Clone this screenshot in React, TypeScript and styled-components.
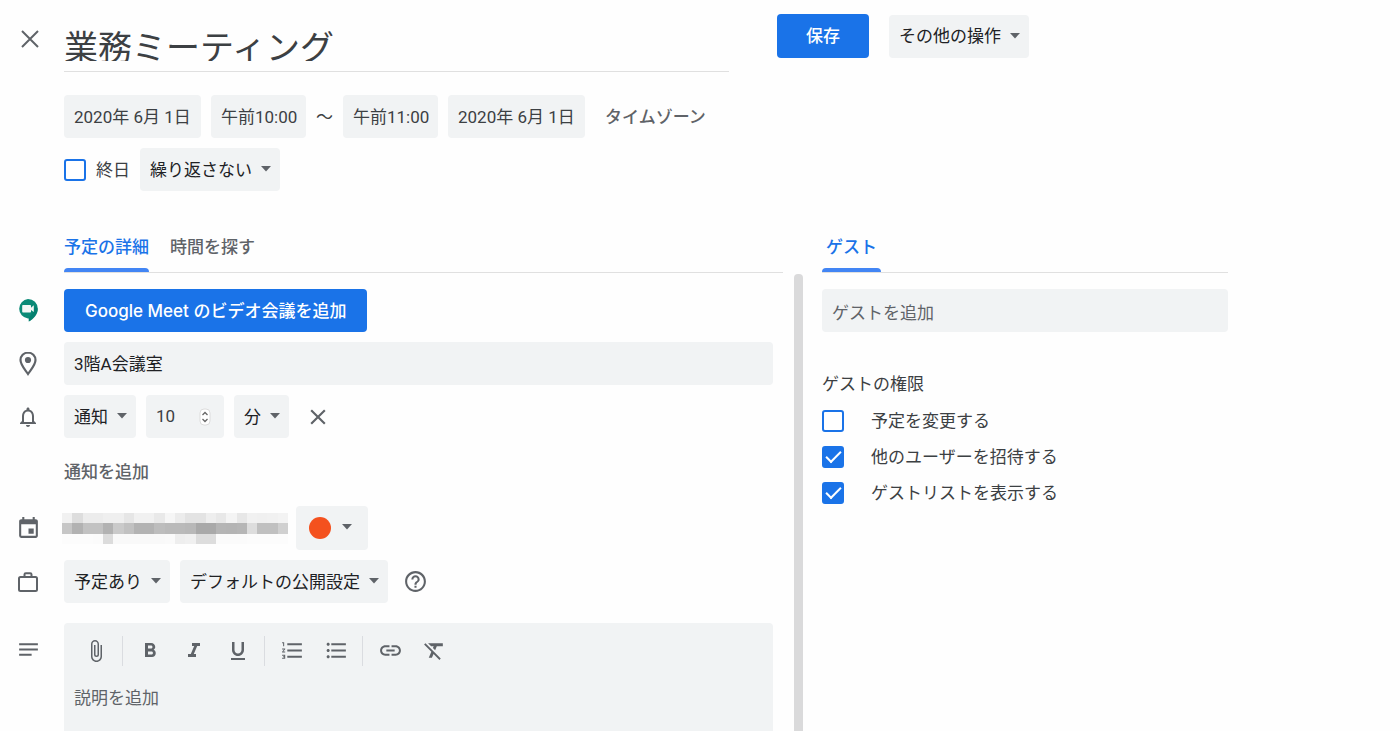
import React from 'react';
import styled, { createGlobalStyle, css } from 'styled-components';
import {
  MdAttachFile,
  MdClose,
  MdEvent,
  MdFormatBold,
  MdFormatClear,
  MdFormatItalic,
  MdFormatListBulleted,
  MdFormatListNumbered,
  MdFormatUnderlined,
  MdHelpOutline,
  MdInsertLink,
  MdNotes,
  MdNotificationsNone,
} from 'react-icons/md';

const color = {
  page: '#fefefe',
  field: '#f1f3f4',
  blue: '#1a73e8',
  tab: '#4285f4',
  strong: '#202124',
  text: '#3c4043',
  muted: '#5f6368',
  line: '#e0e0e0',
};

const GlobalStyle = createGlobalStyle`
  *, *::before, *::after { box-sizing: border-box; }
  body {
    margin: 0;
    background: ${color.page};
    color: ${color.text};
    font-family: Roboto, 'Noto Sans CJK JP', sans-serif;
    font-size: 17px;
    line-height: 24px;
  }
  button, input, select, textarea {
    margin: 0;
    font: inherit;
    color: inherit;
  }
`;

const Page = styled.div`
  display: flex;
  flex-direction: column;
  height: 100vh;
  padding-right: 172px;
  overflow: hidden;
`;

const Header = styled.header`
  display: flex;
  align-items: flex-start;
  padding-top: 14px;
`;

const IconButton = styled.button`
  display: flex;
  align-items: center;
  justify-content: center;
  flex: none;
  padding: 0;
  border: 0;
  background: none;
  color: ${color.muted};
  cursor: pointer;
`;

const CloseButton = styled(IconButton)`
  width: 60px;
  height: 50px;
  margin-right: 4px;
`;

const TitleField = styled.div`
  flex: 1;
  min-width: 0;
  height: 58px;
  border-bottom: 1px solid ${color.line};
`;

const TitleInput = styled.input`
  display: block;
  width: 100%;
  height: 47px;
  padding: 16px 0 0;
  border: 0;
  outline: 0;
  background: none;
  font-size: 34px;
  line-height: 34px;
`;

const HeaderActions = styled.div`
  display: flex;
  align-items: center;
  gap: 20px;
  width: 451px;
  margin-left: 48px;
`;

const PrimaryButton = styled.button<{ $pad: number }>`
  height: 44px;
  padding: 0 ${(p) => p.$pad}px;
  border: 0;
  border-radius: 4px;
  background: ${color.blue};
  color: #fff;
  font-family: Inter, 'Noto Sans CJK JP', sans-serif;
  font-weight: 500;
  white-space: nowrap;
  cursor: pointer;
`;

const MeetButton = styled(PrimaryButton)`
  height: 43px;
`;

const Schedule = styled.section`
  display: flex;
  flex-direction: column;
  gap: 10px;
  padding: 23px 0 0 64px;
`;

const Line = styled.div`
  display: flex;
  align-items: center;
  gap: 10px;
`;

const fieldBox = css`
  height: 43px;
  border: 0;
  border-radius: 4px;
  outline: 0;
  background: ${color.field};
`;

const TextField = styled.input<{ $width?: string }>`
  ${fieldBox}
  width: ${(p) => p.$width ?? '100%'};
  padding: 0 10px 2px;
  &::placeholder { color: ${color.muted}; opacity: 1; }
`;

const PickerField = styled(TextField)`
  padding: 0 0 2px 10px;
`;

const PlaceField = styled(TextField)`
  color: ${color.strong};
`;

const LinkButton = styled.button`
  padding: 0;
  border: 0;
  background: none;
  color: ${color.muted};
  font-weight: 500;
  cursor: pointer;
`;

const ZoneButton = styled(LinkButton)`
  margin-left: 10px;
`;

const SelectWrap = styled.span`
  position: relative;
  display: inline-flex;
  flex: none;
`;

const SelectBox = styled.select`
  ${fieldBox}
  appearance: none;
  padding: 0 28px 0 10px;
  color: ${color.strong};
  cursor: pointer;
`;

const Arrow = styled.svg`
  position: absolute;
  right: 9px;
  top: 18px;
  pointer-events: none;
`;

const Check = styled.input`
  appearance: none;
  display: grid;
  place-content: center;
  flex: none;
  width: 22px;
  height: 22px;
  border: 2px solid ${color.blue};
  border-radius: 3px;
  background: #fff;
  cursor: pointer;

  &:checked { background: ${color.blue}; }
  &:checked::after {
    content: '';
    width: 15px;
    height: 8px;
    margin-bottom: 4px;
    border: solid #fff;
    border-width: 0 0 2px 2px;
    transform: rotate(-45deg);
  }
`;

const AllDay = styled.label`
  display: flex;
  align-items: center;
  gap: 10px;
`;

const Body = styled.div`
  display: flex;
  flex: 1;
  gap: 19px;
  min-height: 0;
  margin-top: 30px;
`;

const Main = styled.main`
  display: flex;
  flex: 1;
  flex-direction: column;
  min-width: 0;
`;

const Guests = styled.aside`
  flex: none;
  width: 406px;
`;

const Tabs = styled.div`
  display: flex;
  flex: none;
  gap: 21px;
  height: 52px;
  border-bottom: 1px solid ${color.line};
`;

const MainTabs = styled(Tabs)`
  margin: 0 20px 0 64px;
`;

const Tab = styled.button<{ $active?: boolean; $pad?: number }>`
  position: relative;
  padding: 0 ${(p) => p.$pad ?? 0}px;
  border: 0;
  background: none;
  color: ${(p) => (p.$active ? color.blue : color.muted)};
  font-weight: 500;
  cursor: pointer;

  &::after {
    content: '';
    display: ${(p) => (p.$active ? 'block' : 'none')};
    position: absolute;
    inset: auto 0 0;
    height: 4px;
    border-radius: 4px 4px 0 0;
    background: ${color.tab};
  }
`;

const Pane = styled.div`
  display: flex;
  flex: 1;
  min-height: 0;
`;

const PaneContent = styled.div`
  display: flex;
  flex: 1;
  flex-direction: column;
  gap: 10px;
  min-width: 0;
  padding: 16px 21px 0 0;
  overflow-y: auto;
  scrollbar-width: none;
`;

const ScrollTrack = styled.div`
  width: 9px;
  margin-top: 1px;
  border-radius: 4px 4px 0 0;
  background: #dadadb;
`;

const Row = styled.div`
  display: flex;
  flex: none;
  align-items: center;
`;

const DescriptionRow = styled(Row)`
  align-items: flex-start;
  margin-top: 10px;
`;

const RowIcon = styled.span`
  display: flex;
  align-items: center;
  justify-content: center;
  flex: none;
  width: 56px;
  height: 43px;
  margin-right: 8px;
  color: ${color.muted};
`;

const DescriptionIcon = styled(RowIcon)`
  height: 53px;
`;

const AddRow = styled.div`
  display: flex;
  flex: none;
  align-items: center;
  height: 48px;
  padding-left: 64px;
`;

const NumberWrap = styled.span`
  position: relative;
  display: inline-flex;
`;

const NumberInput = styled(TextField)`
  appearance: textfield;
  &::-webkit-inner-spin-button { appearance: none; }
`;

const Stepper = styled.svg`
  position: absolute;
  right: 13px;
  top: 13px;
`;

const RemoveButton = styled(IconButton)`
  width: 38px;
  height: 43px;
`;

const HelpButton = styled(IconButton)`
  width: 34px;
  height: 43px;
`;

const Masked = styled.svg`
  flex: none;
  margin: 0 -2px 0 -2px;
`;

const ColorSelect = styled(SelectBox)`
  width: 72px;
  height: 44px;
  color: transparent;
`;

const ColorWrap = styled(SelectWrap)`
  svg { right: 16px; }
`;

const ColorDot = styled.span`
  position: absolute;
  left: 13px;
  top: 11px;
  width: 22px;
  height: 22px;
  border-radius: 50%;
  background: #f4511e;
  pointer-events: none;
`;

const Editor = styled.div`
  flex: 1;
  min-width: 0;
  border-radius: 4px;
  background: ${color.field};
`;

const Toolbar = styled.div`
  display: flex;
  align-items: center;
  height: 55px;
  padding-left: 10px;
`;

const ToolButton = styled(IconButton)`
  width: 44px;
  height: 44px;
`;

const Divider = styled.span`
  width: 1px;
  height: 30px;
  margin: 0 5px 0 4px;
  background: #dadce0;
`;

const Description = styled.textarea`
  display: block;
  width: 100%;
  height: 160px;
  padding: 8px 10px;
  border: 0;
  outline: 0;
  resize: none;
  background: none;
  &::placeholder { color: ${color.muted}; opacity: 1; }
`;

const GuestSearch = styled(TextField)`
  margin-top: 16px;
  padding: 5px 10px 0;
`;

const Permissions = styled.fieldset`
  display: flex;
  flex-direction: column;
  margin: 40px 0 0;
  padding: 0;
  border: 0;
`;

const Legend = styled.legend`
  padding: 0;
  margin-bottom: 7px;
`;

const Permission = styled.label`
  display: flex;
  align-items: center;
  gap: 27px;
  height: 36px;
`;

type SelectProps = { label: string; value: string };

function Select({ label, value }: SelectProps) {
  return (
    <SelectWrap>
      <SelectBox aria-label={label} defaultValue={value}>
        <option>{value}</option>
      </SelectBox>
      <DownArrow />
    </SelectWrap>
  );
}

function DownArrow() {
  return (
    <Arrow width="10" height="6" viewBox="0 0 10 6" fill={color.muted} aria-hidden="true">
      <path d="M0 0h10L5 5.4z" />
    </Arrow>
  );
}

function CloseIcon() {
  return (
    <svg width="18" height="18" viewBox="0 0 18 18" fill="none" stroke="currentColor" strokeWidth="2" aria-hidden="true">
      <path d="M1 1l16 16M17 1L1 17" />
    </svg>
  );
}

function MeetIcon() {
  return (
    <svg width="20" height="23" viewBox="0 0 20 23" aria-hidden="true">
      <path d="M10 0a9.8 9.8 0 0 1 9.8 9.8c0 5.4-4.2 10.3-9 12.7v-3H10A9.8 9.8 0 0 1 10 0z" fill="#0b8a77" />
      <path d="M19.8 9.8c0 5.4-4.2 10.3-9 12.7v-3l3.5-5.5 3-7z" fill="#00796b" opacity=".6" />
      <path d="M5 6h7.2a.8.8 0 0 1 .8.8v1.9L15.800 6.300v6.700L13 10.900v1.900a.8.8 0 0 1-.8.8H5a.8.8 0 0 1-.8-.8v-6A.8.8 0 0 1 5 6z" fill="#f4f7f6" />
    </svg>
  );
}

function PinIcon() {
  return (
    <svg width="18" height="25" viewBox="0 0 18 25" aria-hidden="true">
      <path
        d="M9 1.500C4.700 1.500 1.500 4.800 1.500 9c0 4.900 4.600 9.600 7.500 14 2.900-4.400 7.500-9.100 7.500-14 0-4.200-3.200-7.500-7.500-7.500z"
        fill="none"
        stroke="currentColor"
        strokeWidth="2.200"
      />
      <circle cx="9" cy="9" r="3.100" fill="currentColor" />
    </svg>
  );
}

function BriefcaseIcon() {
  return (
    <svg width="22" height="20" viewBox="0 0 22 20" fill="none" stroke="currentColor" strokeWidth="2" aria-hidden="true">
      <rect x="2" y="5" width="18" height="14" rx="1.500" />
      <path d="M7.500 5V2.500A1.300 1.300 0 0 1 8.800 1.200h4.400a1.300 1.300 0 0 1 1.300 1.300V5" />
    </svg>
  );
}

const maskRows = [
  'f1 dd ec ec ef ef e6 f1 f1 e9 f6 ec e3 e3 ee e8 f4 e7 f1 f0 f1 f3',
  'c6 b2 c2 c2 b2 ca c1 b3 b3 bd ba ba b8 a9 a9 b5 b4 b6 dd c0 c0 d0',
  'fc fc fc fb dc f9 f9 f9 f9 f9 fa ee f0 dd dd fb fb fb fc fc fc fc',
].map((row) => row.split(' '));

function MaskedAccount() {
  return (
    <Masked width="226" height="31" viewBox="0 0 22 3" preserveAspectRatio="none" shapeRendering="crispEdges" role="img" aria-label="カレンダー">
      {maskRows.map((row, y) =>
        row.map((v, x) => <rect key={`${x}-${y}`} x={x} y={y} width="1" height="1" fill={`#${v}${v}${v}`} />),
      )}
    </Masked>
  );
}

const permissions = [
  { label: '予定を変更する', checked: false },
  { label: '他のユーザーを招待する', checked: true },
  { label: 'ゲストリストを表示する', checked: true },
];

export default function App() {
  return (
    <>
      <GlobalStyle />
      <Page>
        <Header>
          <CloseButton aria-label="閉じる"><CloseIcon /></CloseButton>
          <TitleField>
            <TitleInput aria-label="タイトル" defaultValue="業務ミーティング" />
          </TitleField>
          <HeaderActions>
            <PrimaryButton $pad={29}>保存</PrimaryButton>
            <Select label="操作" value="その他の操作" />
          </HeaderActions>
        </Header>

        <Schedule>
          <Line>
            <PickerField $width="137px" aria-label="開始日" defaultValue="2020年 6月 1日" />
            <PickerField $width="95px" aria-label="開始時刻" defaultValue="午前10:00" />
            <span>～</span>
            <PickerField $width="95px" aria-label="終了時刻" defaultValue="午前11:00" />
            <PickerField $width="137px" aria-label="終了日" defaultValue="2020年 6月 1日" />
            <ZoneButton>タイムゾーン</ZoneButton>
          </Line>
          <Line>
            <AllDay><Check type="checkbox" />終日</AllDay>
            <Select label="繰り返し" value="繰り返さない" />
          </Line>
        </Schedule>

        <Body>
          <Main>
            <MainTabs>
              <Tab $active>予定の詳細</Tab>
              <Tab>時間を探す</Tab>
            </MainTabs>
            <Pane>
              <PaneContent>
                <Row>
                  <RowIcon><MeetIcon /></RowIcon>
                  <MeetButton $pad={21}>Google Meet のビデオ会議を追加</MeetButton>
                </Row>
                <Row>
                  <RowIcon><PinIcon /></RowIcon>
                  <PlaceField aria-label="場所" defaultValue="3階A会議室" />
                </Row>
                <Row>
                  <RowIcon><MdNotificationsNone size={24} /></RowIcon>
                  <Line>
                    <Select label="通知方法" value="通知" />
                    <NumberWrap>
                      <NumberInput $width="78px" type="number" aria-label="通知時間" defaultValue={10} />
                      <Stepper width="12" height="18" viewBox="0 0 12 18" fill="none" aria-hidden="true">
                        <rect x="1" y="1" width="10" height="16" rx="4" fill="#fff" stroke="#dcdcdc" />
                        <path d="M3.500 7L6 4.500 8.500 7M3.500 11L6 13.500 8.500 11" stroke="#666" strokeWidth="1.300" />
                      </Stepper>
                    </NumberWrap>
                    <Select label="単位" value="分" />
                    <RemoveButton aria-label="通知を削除"><MdClose size={26} /></RemoveButton>
                  </Line>
                </Row>
                <AddRow><LinkButton>通知を追加</LinkButton></AddRow>
                <Row>
                  <RowIcon><MdEvent size={25} /></RowIcon>
                  <Line>
                    <MaskedAccount />
                    <ColorWrap>
                      <ColorSelect aria-label="予定の色"><option aria-label="ミカン" /></ColorSelect>
                      <ColorDot />
                      <DownArrow />
                    </ColorWrap>
                  </Line>
                </Row>
                <Row>
                  <RowIcon><BriefcaseIcon /></RowIcon>
                  <Line>
                    <Select label="予定の有無" value="予定あり" />
                    <Select label="公開設定" value="デフォルトの公開設定" />
                    <HelpButton aria-label="ヘルプ"><MdHelpOutline size={25} /></HelpButton>
                  </Line>
                </Row>
                <DescriptionRow>
                  <DescriptionIcon><MdNotes size={25} /></DescriptionIcon>
                  <Editor>
                    <Toolbar>
                      <ToolButton aria-label="ファイルを添付"><MdAttachFile size={24} /></ToolButton>
                      <Divider />
                      <ToolButton aria-label="太字"><MdFormatBold size={24} /></ToolButton>
                      <ToolButton aria-label="斜体"><MdFormatItalic size={24} /></ToolButton>
                      <ToolButton aria-label="下線"><MdFormatUnderlined size={24} /></ToolButton>
                      <Divider />
                      <ToolButton aria-label="番号付きリスト"><MdFormatListNumbered size={25} /></ToolButton>
                      <ToolButton aria-label="箇条書き"><MdFormatListBulleted size={25} /></ToolButton>
                      <Divider />
                      <ToolButton aria-label="リンク"><MdInsertLink size={25} /></ToolButton>
                      <ToolButton aria-label="書式をクリア"><MdFormatClear size={25} /></ToolButton>
                    </Toolbar>
                    <Description aria-label="説明" placeholder="説明を追加" />
                  </Editor>
                </DescriptionRow>
              </PaneContent>
              <ScrollTrack />
            </Pane>
          </Main>

          <Guests>
            <Tabs>
              <Tab $active $pad={4}>ゲスト</Tab>
            </Tabs>
            <GuestSearch aria-label="ゲスト" placeholder="ゲストを追加" />
            <Permissions>
              <Legend>ゲストの権限</Legend>
              {permissions.map((p) => (
                <Permission key={p.label}>
                  <Check type="checkbox" defaultChecked={p.checked} />
                  {p.label}
                </Permission>
              ))}
            </Permissions>
          </Guests>
        </Body>
      </Page>
    </>
  );
}
